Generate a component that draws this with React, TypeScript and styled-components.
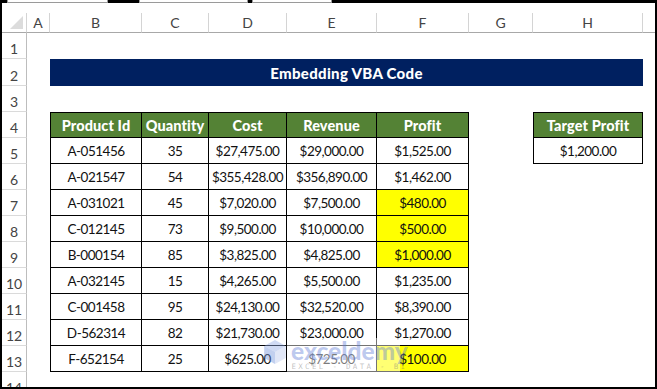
import styled, { createGlobalStyle } from 'styled-components'

const GlobalStyle = createGlobalStyle`
  html, body {
    margin: 0;
    padding: 0;
    background: #000;
  }
  body {
    font-family: Lato, 'Liberation Sans', sans-serif;
  }
`

const COLS = '25px 23px 92px 67px 78px 90px 92px 64px 110px 12px'

const Frame = styled.div`
  width: 657px;
  height: 389px;
  box-sizing: border-box;
  padding: 0 2px 2px 2px;
  background: #000;
  display: flex;
  flex-direction: column;
  overflow: hidden;
`

const TopStrip = styled.div`
  height: 3px;
  display: flex;
  padding-left: 5px;
`

const ToolBox = styled.div<{ $w: number; $ml: number }>`
  width: ${(p) => p.$w}px;
  margin-left: ${(p) => p.$ml}px;
  height: 3px;
  box-sizing: border-box;
  background: #fff;
  border: 1px solid #9a9a9a;
  border-top: none;
`

const Sheet = styled.div`
  flex: 1;
  background: #fff;
  position: relative;
  overflow: hidden;
  padding-top: 10px;
`

const Row = styled.div<{ $h: number }>`
  display: grid;
  grid-template-columns: ${COLS};
  height: ${(p) => p.$h}px;
`

const ColHead = styled.div`
  box-sizing: border-box;
  border-right: 1px solid #d4d4d4;
  border-bottom: 1px solid #a8a8a8;
  display: flex;
  align-items: center;
  justify-content: center;
  font-size: 14px;
  color: #444;
  &:last-child {
    border-right: none;
  }
`

const Corner = styled(ColHead)`
  position: relative;
  &::after {
    content: '';
    position: absolute;
    right: 3px;
    bottom: 3px;
    width: 0;
    height: 0;
    border-left: 13px solid transparent;
    border-bottom: 13px solid #dcdcdc;
  }
`

const RowHead = styled.div`
  box-sizing: border-box;
  border-right: 1px solid #bdbdbd;
  border-bottom: 1px solid #dadada;
  display: flex;
  align-items: center;
  justify-content: center;
  padding-top: 6px;
  font-size: 14px;
  color: #444;
`

type Kind = 'empty' | 'head' | 'data'

const Cell = styled.div<{ $kind: Kind; $yellow?: boolean; $left?: boolean; $top?: boolean }>`
  box-sizing: border-box;
  display: flex;
  align-items: center;
  justify-content: center;
  white-space: nowrap;
  overflow: hidden;
  font-size: 13.5px;
  letter-spacing: -0.5px;
  color: #111;
  ${(p) =>
    p.$kind === 'head' || p.$kind === 'data'
      ? `border-right: 1px solid #000; border-bottom: 1px solid #000;`
      : ''}
  ${(p) => (p.$left ? 'border-left: 1px solid #000;' : '')}
  ${(p) => (p.$top ? 'border-top: 1px solid #000;' : '')}
  ${(p) =>
    p.$kind === 'head'
      ? `background: #548235; color: #fff; font-weight: 900; font-size: 14.5px; letter-spacing: 0.1px;`
      : ''}
  ${(p) => (p.$yellow ? 'background: #ffff00;' : '')}
`

const Title = styled.div`
  grid-column: 3 / span 7;
  background: #002060;
  color: #fff;
  font-weight: 900;
  font-size: 15px;
  display: flex;
  align-items: center;
  justify-content: center;
  letter-spacing: 0.3px;
`

const Watermark = styled.div`
  position: absolute;
  left: 260px;
  top: 336px;
  display: flex;
  align-items: flex-start;
  gap: 3px;
  pointer-events: none;
`

const Wash = styled.div`
  position: absolute;
  left: 285px;
  top: 335px;
  width: 113px;
  height: 36px;
  background: rgba(255, 255, 255, 0.45);
`

const Brand = styled.div`
  display: flex;
  flex-direction: column;
  align-items: center;
  line-height: 1;
`

const BrandName = styled.span`
  font-size: 24.5px;
  font-weight: 900;
  color: rgba(95, 125, 215, 0.42);
`

const BrandTag = styled.span`
  margin-top: -1px;
  font-size: 7.5px;
  letter-spacing: 2.3px;
  color: rgba(120, 120, 120, 0.45);
  font-family: 'DejaVu Sans Mono', monospace;
`

const HEAD = ['Product Id', 'Quantity', 'Cost', 'Revenue', 'Profit']

const DATA: [string, string, string, string, string, boolean][] = [
  ['A-051456', '35', '$27,475.00', '$29,000.00', '$1,525.00', false],
  ['A-021547', '54', '$355,428.00', '$356,890.00', '$1,462.00', false],
  ['A-031021', '45', '$7,020.00', '$7,500.00', '$480.00', true],
  ['C-012145', '73', '$9,500.00', '$10,000.00', '$500.00', true],
  ['B-000154', '85', '$3,825.00', '$4,825.00', '$1,000.00', true],
  ['A-032145', '15', '$4,265.00', '$5,500.00', '$1,235.00', false],
  ['C-001458', '95', '$24,130.00', '$32,520.00', '$8,390.00', false],
  ['D-562314', '82', '$21,730.00', '$23,000.00', '$1,270.00', false],
  ['F-652154', '25', '$625.00', '$725.00', '$100.00', true],
]

const LETTERS = ['A', 'B', 'C', 'D', 'E', 'F', 'G', 'H', '']

const LogoIcon = () => (
  <svg width="26" height="26" viewBox="0 0 24 24">
    <polygon points="12,1 22,6.5 12,12 2,6.5" fill="rgba(150,175,230,0.45)" />
    <polygon points="2,6.5 12,12 12,23 2,17.5" fill="rgba(120,150,220,0.45)" />
    <polygon points="22,6.5 12,12 12,23 22,17.5" fill="rgba(180,195,235,0.4)" />
  </svg>
)

export default function App() {
  return (
    <Frame>
      <GlobalStyle />
      <TopStrip>
        <ToolBox $w={101} $ml={0} />
        <ToolBox $w={109} $ml={31} />
        <ToolBox $w={80} $ml={4} />
      </TopStrip>
      <Sheet>
        <Row $h={20}>
          <Corner />
          {LETTERS.map((l, i) => (
            <ColHead key={i}>{l}</ColHead>
          ))}
        </Row>
        <Row $h={26}>
          <RowHead>1</RowHead>
        </Row>
        <Row $h={27}>
          <RowHead>2</RowHead>
          <Cell $kind="empty" />
          <Title>Embedding VBA Code</Title>
        </Row>
        <Row $h={26}>
          <RowHead>3</RowHead>
        </Row>
        <Row $h={26}>
          <RowHead>4</RowHead>
          <Cell $kind="empty" />
          {HEAD.map((h, i) => (
            <Cell key={h} $kind="head" $top $left={i === 0}>
              {h}
            </Cell>
          ))}
          <Cell $kind="empty" />
          <Cell $kind="head" $top $left>
            Target Profit
          </Cell>
        </Row>
        {DATA.map((r, idx) => (
          <Row $h={26} key={r[0]}>
            <RowHead>{idx + 5}</RowHead>
            <Cell $kind="empty" />
            <Cell $kind="data" $left>
              {r[0]}
            </Cell>
            <Cell $kind="data">{r[1]}</Cell>
            <Cell $kind="data">{r[2]}</Cell>
            <Cell $kind="data">{r[3]}</Cell>
            <Cell $kind="data" $yellow={r[5]}>
              {r[4]}
            </Cell>
            {idx === 0 && (
              <>
                <Cell $kind="empty" />
                <Cell $kind="data" $left>
                  $1,200.00
                </Cell>
              </>
            )}
          </Row>
        ))}
        <Row $h={26}>
          <RowHead>14</RowHead>
        </Row>
        <Wash />
        <Watermark>
          <LogoIcon />
          <Brand>
            <BrandName>exceldemy</BrandName>
            <BrandTag>EXCEL - DATA - BI</BrandTag>
          </Brand>
        </Watermark>
      </Sheet>
    </Frame>
  )
}
